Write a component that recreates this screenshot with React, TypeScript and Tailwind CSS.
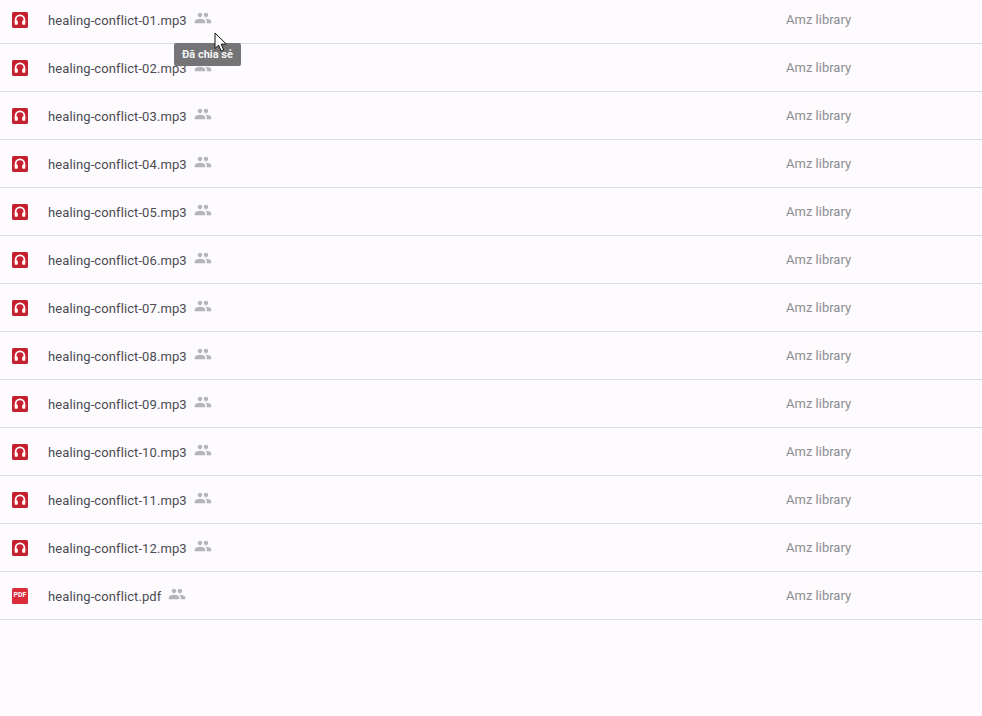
import React from "react";

const files = [
  "healing-conflict-01.mp3",
  "healing-conflict-02.mp3",
  "healing-conflict-03.mp3",
  "healing-conflict-04.mp3",
  "healing-conflict-05.mp3",
  "healing-conflict-06.mp3",
  "healing-conflict-07.mp3",
  "healing-conflict-08.mp3",
  "healing-conflict-09.mp3",
  "healing-conflict-10.mp3",
  "healing-conflict-11.mp3",
  "healing-conflict-12.mp3",
  "healing-conflict.pdf",
];

function AudioIcon() {
  return (
    <svg width="16" height="16" viewBox="0 0 16 16" className="shrink-0">
      <rect width="16" height="16" rx="1.5" fill="#c5202f" />
      <path d="M3.6 9.5V7.8a4.4 4.4 0 0 1 8.8 0v1.7" fill="none" stroke="#fff" strokeWidth="1.8" />
      <rect x="2.7" y="8.4" width="3.1" height="4.4" rx="0.7" fill="#fff" />
      <rect x="10.2" y="8.4" width="3.1" height="4.4" rx="0.7" fill="#fff" />
    </svg>
  );
}

function PdfIcon() {
  return (
    <div className="w-4 h-4 shrink-0 rounded-[1.5px] bg-[#dc2c3c] flex items-center justify-center text-white text-[7px] font-bold leading-none">
      PDF
    </div>
  );
}

function SharedIcon() {
  return (
    <svg width="18" height="18" viewBox="0 0 24 24" fill="#b5b5b9" className="shrink-0 -mt-[3px]">
      <path d="M16 11c1.66 0 2.99-1.34 2.99-3S17.66 5 16 5s-3 1.34-3 3 1.34 3 3 3zm-8 0c1.66 0 2.99-1.34 2.99-3S9.66 5 8 5 5 6.34 5 8s1.34 3 3 3zm0 2c-2.33 0-7 1.17-7 3.5V19h14v-2.5C15 14.17 10.33 13 8 13zm8 0c-.29 0-.62.02-.97.05 1.16.84 1.97 1.97 1.97 3.45V19h6v-2.5c0-2.33-4.67-3.5-7-3.5z" />
    </svg>
  );
}

export default function App() {
  return (
    <div className="relative h-[716px] overflow-hidden bg-[#fdfbfe] font-['Roboto',sans-serif]">
      <div className="-mt-1">
        {files.map((name) => (
          <div key={name} className="h-12 flex items-center border-b border-[#dcdbde]">
            <div className="pl-3 w-12 shrink-0">
              {name.endsWith(".pdf") ? <PdfIcon /> : <AudioIcon />}
            </div>
            <div className="w-[738px] shrink-0 flex items-center gap-[7px]">
              <span className="mt-[2px] text-[13px] font-normal tracking-[0.1px] text-[#4c4c52]">{name}</span>
              <SharedIcon />
            </div>
            <span className="text-[13px] text-[#8e8d92]">Amz library</span>
          </div>
        ))}
      </div>

      <div className="absolute left-[174px] top-[43px] h-[23px] w-[67px] pl-2 pt-[1px] flex items-center rounded-[2px] bg-[#757578] text-[#f4f4f4] text-[11px] font-bold">
        Đã chia sẻ
      </div>

      <svg width="14" height="21" viewBox="0 0 14 21" className="absolute left-[214px] top-[32px]">
        <path
          d="M1 1v15.5l3.6-3.3 2.5 5.8 2.6-1.1-2.5-5.7 5-.2z"
          fill="#fff"
          stroke="#111"
          strokeWidth="1"
          strokeLinejoin="round"
        />
      </svg>
    </div>
  );
}
